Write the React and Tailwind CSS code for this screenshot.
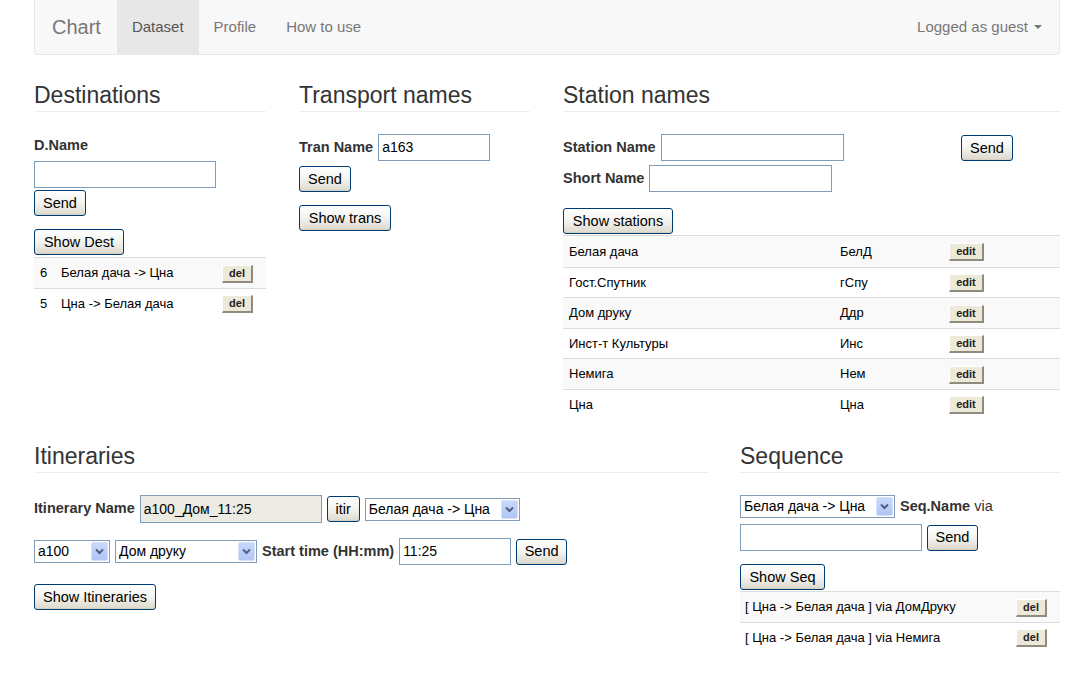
import React from "react";

const Btn = ({ children, w, className = "" }) => (
  <button
    className={`h-[26px] rounded-[3px] border border-[#003c74] bg-gradient-to-b from-[#ffffff] via-[#f3f3ef] to-[#dcd8cc] text-[14.5px] leading-none text-black shadow-[inset_0_-1px_#d6d0c0] ${className}`}
    style={{ width: w }}
  >
    {children}
  </button>
);

const Small = ({ children, w }) => (
  <button
    className="h-[18px] bg-[#ece9d8] text-[11px] font-bold leading-none text-[#222] border-t border-l border-t-white border-l-white border-r-2 border-b-2 border-r-[#8f8c7f] border-b-[#8f8c7f]"
    style={{ width: w }}
  >
    {children}
  </button>
);

const Input = ({ w, h = 27, value = "", disabled }) => (
  <div
    className={`border border-[#7f9db9] px-[3px] flex items-center text-[14px] text-black ${disabled ? "bg-[#ebebe4]" : "bg-white"}`}
    style={{ width: w, height: h }}
  >
    {value}
  </div>
);

const Select = ({ w, value }) => (
  <div
    className="h-[23px] border border-[#7f9db9] bg-white flex items-center text-[14px] text-black"
    style={{ width: w }}
  >
    <span className="flex-1 pl-[3px] truncate">{value}</span>
    <span className="w-[17px] h-[19px] mr-[1px] rounded-[2px] border border-[#d6e0fb] bg-gradient-to-b from-[#c9d8fc] to-[#b0c6f6] flex items-center justify-center">
      <svg width="9" height="7" viewBox="0 0 9 7">
        <path d="M1 1.5 L4.5 5 L8 1.5" fill="none" stroke="#4d6185" strokeWidth="2" />
      </svg>
    </span>
  </div>
);

const Heading = ({ children }) => (
  <h3 className="text-[23px] leading-[25px] pb-[3px] border-b border-[#eee] text-[#333]">
    {children}
  </h3>
);

const stations = [
  ["Белая дача", "БелД"],
  ["Гост.Спутник", "гСпу"],
  ["Дом друку", "Ддр"],
  ["Инст-т Культуры", "Инс"],
  ["Немига", "Нем"],
  ["Цна", "Цна"],
];

export default function App() {
  return (
    <div className="min-h-screen bg-white text-[#333] font-['Liberation_Sans',Arial,sans-serif]">
      <div className="pl-[34px] w-[1060px]">
        {/* navbar */}
        <div className="h-[55px] bg-[#f8f8f8] border border-t-0 border-[#e7e7e7] rounded-b-[4px] flex items-stretch text-[15px] text-[#777]">
          <div className="pl-[17px] pr-[16px] flex items-center text-[20px]">Chart</div>
          <div className="px-[15px] flex items-center bg-[#e7e7e7] text-[#555]">Dataset</div>
          <div className="px-[15px] flex items-center">Profile</div>
          <div className="px-[15px] flex items-center">How to use</div>
          <div className="ml-auto pr-[17px] flex items-center gap-[6px]">
            Logged as guest
            <svg width="8" height="4" viewBox="0 0 8 4">
              <path d="M0 0 L8 0 L4 4 Z" fill="#777" />
            </svg>
          </div>
        </div>

        {/* top row */}
        <div className="flex mt-[28px]">
          <div className="w-[232px]">
            <Heading>Destinations</Heading>
            <div className="mt-[23px] text-[14.5px] leading-[20px] font-bold">D.Name</div>
            <div className="mt-[6px]">
              <Input w={182} />
            </div>
            <div className="mt-[2px]">
              <Btn w={52}>Send</Btn>
            </div>
            <div className="mt-[13px]">
              <Btn w={90} className="h-[25px]">Show Dest</Btn>
            </div>
            <div className="mt-[2px] border-b-0 text-[13px] text-black">
              {[
                ["6", "Белая дача -> Цна"],
                ["5", "Цна -> Белая дача"],
              ].map(([n, t], i) => (
                <div
                  key={n}
                  className={`h-[30.5px] border-t border-[#ddd] flex items-center ${i % 2 === 0 ? "bg-[#f9f9f9]" : ""}`}
                >
                  <span className="w-[27px] pl-[6px]">{n}</span>
                  <span className="flex-1">{t}</span>
                  <span className="w-[44px]">
                    <Small w={31}>del</Small>
                  </span>
                </div>
              ))}
            </div>
          </div>

          <div className="w-[231px] ml-[33px]">
            <Heading>Transport names</Heading>
            <div className="mt-[22px] flex items-center gap-[5px]">
              <span className="text-[14.5px] font-bold">Tran Name</span>
              <Input w={112} value="a163" />
            </div>
            <div className="mt-[5px]">
              <Btn w={52}>Send</Btn>
            </div>
            <div className="mt-[13px]">
              <Btn w={92} className="h-[25px]">Show trans</Btn>
            </div>
          </div>

          <div className="w-[497px] ml-[33px]">
            <Heading>Station names</Heading>
            <div className="mt-[22px] w-[450px] flex items-start justify-between">
              <div className="flex items-center gap-[5px]">
                <span className="text-[14.5px] font-bold">Station Name</span>
                <Input w={183} />
              </div>
              <div className="mt-[1px]">
                <Btn w={52}>Send</Btn>
              </div>
            </div>
            <div className="mt-[4px] flex items-center gap-[5px]">
              <span className="text-[14.5px] font-bold">Short Name</span>
              <Input w={183} />
            </div>
            <div className="mt-[16px]">
              <Btn w={110} className="h-[25px]">Show stations</Btn>
            </div>
            <div className="mt-[1px] text-[13px] text-black border-t border-[#ddd]">
              {stations.map(([n, s], i) => (
                <div
                  key={n}
                  className={`h-[30.5px] flex items-center ${i > 0 ? "border-t border-[#ddd]" : ""} ${i % 2 === 0 ? "bg-[#f9f9f9]" : ""}`}
                >
                  <span className="w-[277px] pl-[6px]">{n}</span>
                  <span className="w-[109px]">{s}</span>
                  <span>
                    <Small w={35}>edit</Small>
                  </span>
                </div>
              ))}
            </div>
          </div>
        </div>

        {/* bottom row */}
        <div className="flex mt-[25px]">
          <div className="w-[674px]">
            <Heading>Itineraries</Heading>
            <div className="mt-[22px] flex items-center gap-[5px]">
              <span className="text-[14.5px] font-bold">Itinerary Name</span>
              <Input w={182} h={28} value="a100_Дом_11:25" disabled />
              <Btn w={33}>itir</Btn>
              <Select w={155} value="Белая дача -> Цна" />
            </div>
            <div className="mt-[15px] flex items-center gap-[5px]">
              <Select w={76} value="a100" />
              <Select w={142} value="Дом друку" />
              <span className="text-[14.5px] font-bold">Start time (HH:mm)</span>
              <Input w={112} value="11:25" />
              <Btn w={51}>Send</Btn>
            </div>
            <div className="mt-[19px]">
              <Btn w={122}>Show Itineraries</Btn>
            </div>
          </div>

          <div className="w-[320px] ml-[32px]">
            <Heading>Sequence</Heading>
            <div className="mt-[22px] flex items-center gap-[5px] text-[14.5px]">
              <Select w={155} value="Белая дача -> Цна" />
              <span>
                <b>Seq.Name</b> via
              </span>
            </div>
            <div className="mt-[6px] flex items-center gap-[5px]">
              <Input w={182} />
              <Btn w={51}>Send</Btn>
            </div>
            <div className="mt-[13px]">
              <Btn w={85}>Show Seq</Btn>
            </div>
            <div className="mt-[1px] text-[13px] text-black">
              {["[ Цна -> Белая дача ] via ДомДруку", "[ Цна -> Белая дача ] via Немига"].map((t, i) => (
                <div
                  key={t}
                  className={`h-[30.5px] border-t border-[#ddd] flex items-center ${i % 2 === 0 ? "bg-[#f9f9f9]" : ""}`}
                >
                  <span className="flex-1 pl-[5px]">{t}</span>
                  <span className="w-[44px]">
                    <Small w={31}>del</Small>
                  </span>
                </div>
              ))}
            </div>
          </div>
        </div>
      </div>
    </div>
  );
}
